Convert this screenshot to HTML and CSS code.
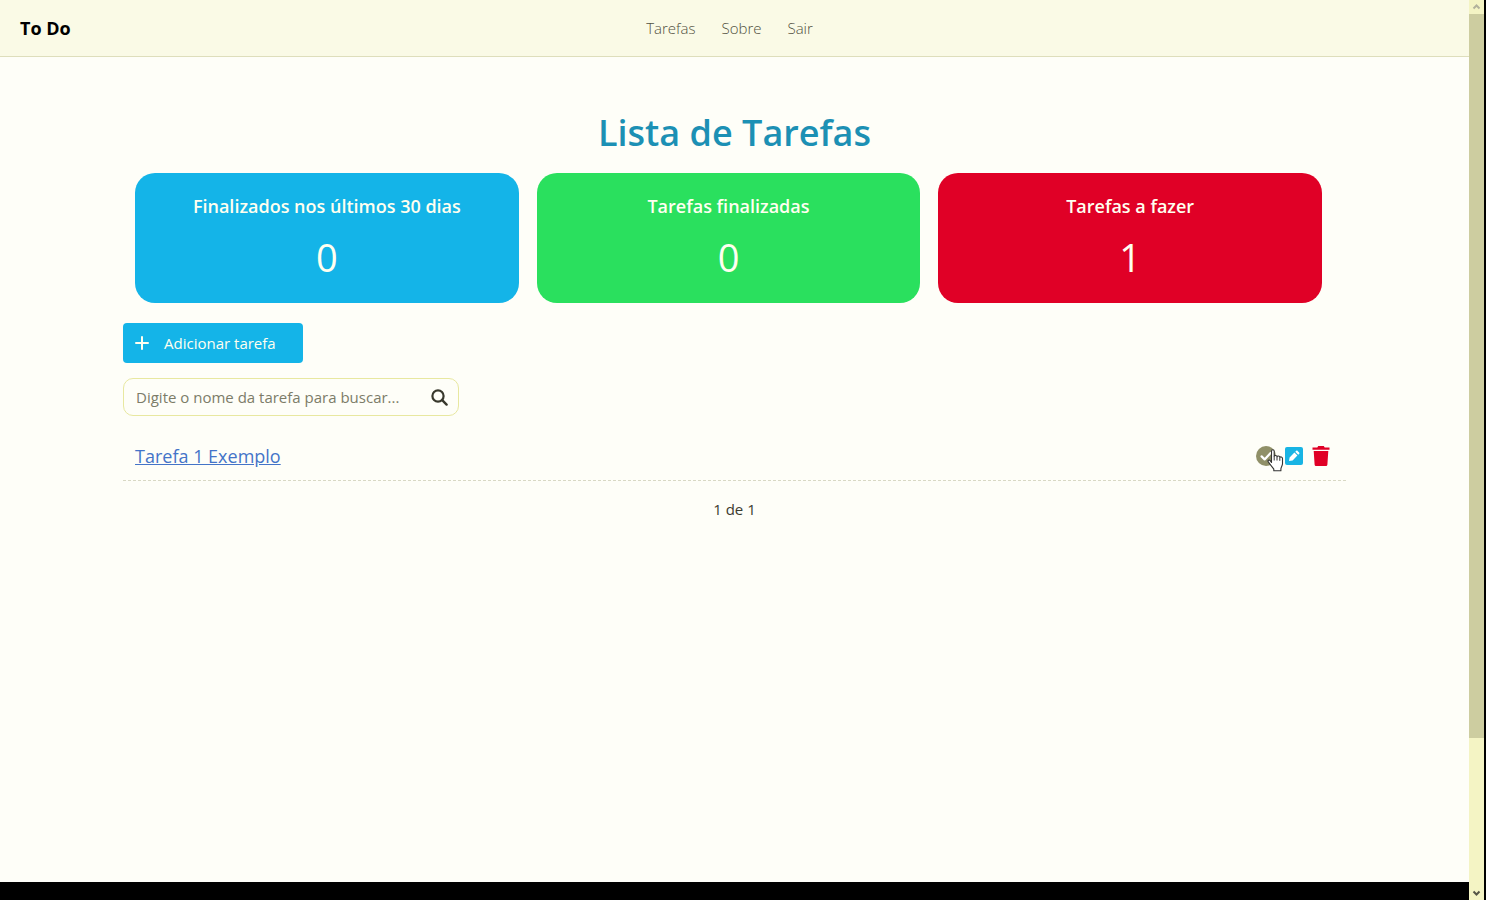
FILE: index.html
```html
<!DOCTYPE html>
<html lang="pt-BR">
<head>
<meta charset="utf-8">
<meta name="viewport" content="width=device-width, initial-scale=1">
<title>To Do</title>
<link rel="stylesheet" href="styles.css">
</head>
<body>
<div class="page">
  <header class="navbar">
    <a class="brand" href="#">To Do</a>
    <nav class="nav">
      <a href="#">Tarefas</a>
      <a href="#">Sobre</a>
      <a href="#">Sair</a>
    </nav>
  </header>

  <main class="content">
    <h1 class="title">Lista de Tarefas</h1>

    <section class="cards">
      <article class="card card-recent">
        <h2>Finalizados nos últimos 30 dias</h2>
        <p>0</p>
      </article>
      <article class="card card-done">
        <h2>Tarefas finalizadas</h2>
        <p>0</p>
      </article>
      <article class="card card-pending">
        <h2>Tarefas a fazer</h2>
        <p>1</p>
      </article>
    </section>

    <button class="add" type="button">
      <svg width="14" height="14" viewBox="0 0 14 14" aria-hidden="true"><path d="M7 1v12M1 7h12" fill="none" stroke="currentColor" stroke-width="2" stroke-linecap="round"/></svg>
      <span>Adicionar tarefa</span>
    </button>

    <form class="search">
      <input type="text" aria-label="Buscar tarefa" placeholder="Digite o nome da tarefa para buscar...">
      <button type="submit" aria-label="Buscar">
        <svg width="17" height="17" viewBox="0 0 17 17" aria-hidden="true"><circle cx="7" cy="7" r="5.6" fill="none" stroke="currentColor" stroke-width="2.2"/><path d="M11.2 11.2l4.4 4.4" stroke="currentColor" stroke-width="2.4" stroke-linecap="round"/></svg>
      </button>
    </form>

    <ul class="tasks">
      <li class="task">
        <a class="task-name" href="#">Tarefa 1 Exemplo</a>
        <div class="actions">
          <button class="check" type="button" aria-label="Finalizar">
            <svg width="20" height="20" viewBox="0 0 20 20" aria-hidden="true"><circle cx="10" cy="10" r="10" fill="currentColor"/><path d="M5.6 10.4l3 3 6-6.4" fill="none" stroke="#fff" stroke-width="2.2" stroke-linecap="round" stroke-linejoin="round"/></svg>
            <svg class="pointer" width="17" height="23" viewBox="0 0 17 23" aria-hidden="true"><path d="M4.5 13.5V2.3c0-2 2.7-2 2.7 0v5.2c.3-1.5 2.6-1.4 2.8.3.4-1.2 2.6-1 2.8.7.5-1 2.7-.8 2.7 1.1v5.2c0 2-1.4 3.2-1.6 5.1v1.8H6.8v-1.6C5.500 18.300 3.500 16 1.300 12.900c-.9-1.500.8-2.700 1.900-1.200z" fill="#fff" stroke="#333" stroke-width="1.100" stroke-linejoin="round"/><path d="M7.200 7.500v4M10 8v3.500M12.800 8.800v3" stroke="#333" stroke-width="1"/></svg>
          </button>
          <button class="edit" type="button" aria-label="Editar">
            <svg width="18" height="18" viewBox="0 0 18 18" aria-hidden="true"><rect width="18" height="18" rx="2" fill="currentColor"/><path d="M4 14l.6-3.600 4.800-4.800 3 3-4.800 4.800zM10.200 4.800l.9-.9c.5-.5 1-.5 1.500 0l1.500 1.500c.5.5.5 1 0 1.500l-.9.900z" fill="#fff"/></svg>
          </button>
          <button class="remove" type="button" aria-label="Excluir">
            <svg width="18" height="20" viewBox="0 0 18 20" aria-hidden="true"><path d="M.5 1.400h4.800L6.200 0h5.600l.9 1.400h4.800v2.300H.5zM1.700 5h14.600l-.9 13.400c-.1 1-.8 1.600-1.700 1.600H4.300c-.9 0-1.600-.6-1.700-1.600z" fill="currentColor"/></svg>
          </button>
        </div>
      </li>
    </ul>

    <p class="pages">1 de 1</p>
  </main>

  <footer class="footer"></footer>
</div>

<div class="scrollbar" aria-hidden="true">
  <svg width="15" height="14" viewBox="0 0 15 14"><path d="M4.500 8.500l3-3 3 3" fill="none" stroke="#b2b29c" stroke-width="2"/></svg>
  <div class="track"><div class="thumb"></div></div>
  <svg width="15" height="14" viewBox="0 0 15 14"><path d="M4.500 5.500l3 3 3-3" fill="none" stroke="#555547" stroke-width="2"/></svg>
</div>
</body>
</html>
```
FILE: styles.css
```css
* {
  box-sizing: border-box;
}

body {
  display: flex;
  min-height: 100vh;
  margin: 0;
  background: #fefef8;
  color: #3c3c30;
  font: 15px/24px "Open Sans", "Noto Sans", sans-serif;
}

h1, h2, p, ul {
  margin: 0;
  padding: 0;
}

button {
  padding: 0;
  border: 0;
  background: none;
  font: inherit;
  cursor: pointer;
}

svg {
  display: block;
}

.page {
  display: flex;
  flex: 1;
  flex-direction: column;
}

.navbar {
  display: grid;
  grid-template-columns: 1fr auto 1fr;
  align-items: center;
  padding: 16px 30px 16px 20px;
  border-bottom: 1px solid #dedebc;
  background: #fafae6;
}

.brand {
  color: #000;
  font-size: 18px;
  font-weight: 700;
  text-decoration: none;
}

.nav {
  display: flex;
  gap: 26px;
}

.nav a {
  color: #505040;
  font-weight: 300;
  text-decoration: none;
}

.content {
  flex: 1;
  width: 83.25%;
  margin: 0 auto;
  padding-top: 52px;
}

.title {
  color: #1c90b4;
  font-size: 36px;
  font-weight: 600;
  line-height: 48px;
  text-align: center;
}

.cards {
  display: grid;
  grid-template-columns: repeat(3, 1fr);
  gap: 18px;
  padding: 16px 24px 20px 12px;
}

.card {
  padding: 18px 16px;
  border-radius: 20px;
  color: #fffff0;
  text-align: center;
}

.card-recent {
  background: #14b4e8;
}

.card-done {
  background: #2ae05e;
}

.card-pending {
  background: #e00026;
}

.card h2 {
  font-size: 18px;
  font-weight: 600;
  line-height: 30px;
}

.card p {
  margin-top: 8px;
  font-size: 38px;
  line-height: 56px;
}

.add {
  display: flex;
  align-items: center;
  gap: 15px;
  padding: 8px 27px 8px 12px;
  border-radius: 4px;
  background: #14b4e8;
  color: #fffff0;
}

.search {
  display: flex;
  align-items: center;
  width: 336px;
  max-width: 100%;
  margin-top: 15px;
  padding: 0 10px 0 12px;
  border: 1px solid #e8e8a0;
  border-radius: 10px;
}

.search input {
  flex: 1;
  min-width: 0;
  height: 36px;
  padding: 0;
  border: 0;
  outline: 0;
  background: none;
  font: inherit;
}

.search input::placeholder {
  color: #7c7c68;
  opacity: 1;
}

.search button {
  color: #38382c;
}

.tasks {
  margin-top: 20px;
  list-style: none;
}

.task {
  display: flex;
  align-items: center;
  justify-content: space-between;
  padding: 6px 16px 10px 12px;
  border-bottom: 1px dashed #d8d8c4;
}

.task-name {
  color: #4474c8;
  font-size: 18px;
  line-height: 28px;
}

.actions {
  display: flex;
  align-items: center;
  gap: 9px;
}

.check {
  position: relative;
  color: #909068;
}

.pointer {
  position: absolute;
  top: 3px;
  left: 11px;
  z-index: 1;
}

.edit {
  color: #18b4e4;
}

.remove {
  color: #e00026;
}

.pages {
  margin-top: 16px;
  text-align: center;
}

.footer {
  height: 18px;
  background: #000;
}

.scrollbar {
  display: flex;
  flex-direction: column;
  width: 17px;
  border-right: 2px solid #000;
  background: #f4f4c4;
}

.track {
  flex: 1;
}

.thumb {
  height: 83%;
  background: #cdcda0;
}
```
